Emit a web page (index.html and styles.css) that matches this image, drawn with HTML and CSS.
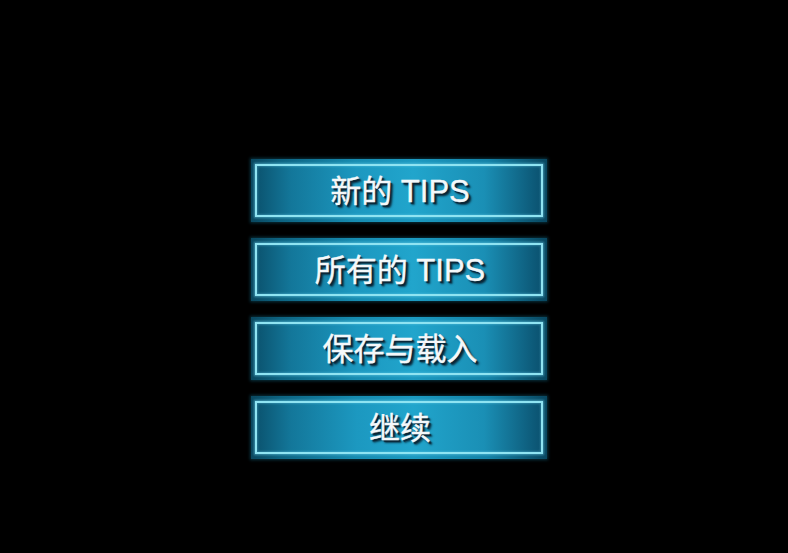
FILE: index.html
```html
<!DOCTYPE html>
<html lang="zh-CN">
<head>
<meta charset="utf-8">
<link rel="stylesheet" href="styles.css">
</head>
<body>
<div class="menu">
  <div class="btn"><div class="inner"><span class="label">新的 TIPS</span></div></div>
  <div class="btn"><div class="inner"><span class="label">所有的 TIPS</span></div></div>
  <div class="btn"><div class="inner"><span class="label">保存与载入</span></div></div>
  <div class="btn"><div class="inner"><span class="label">继续</span></div></div>
</div>
</body>
</html>
```
FILE: styles.css
```css
html, body {
  margin: 0;
  padding: 0;
  background: #000;
  width: 788px;
  height: 553px;
  overflow: hidden;
}
.menu {
  display: flex;
  flex-direction: column;
  gap: 16px;
  padding-top: 159px;
  padding-left: 251px;
}
.btn {
  width: 296px;
  height: 63px;
  box-sizing: border-box;
  padding: 5px 4px 5px 4px;
  background: linear-gradient(90deg, #0a4860 0%, #0d6482 10%, #178cb1 35%, #1c9ac1 55%, #1483a8 80%, #094760 100%);
  box-shadow: 0 0 3px 1px rgba(20, 110, 140, 0.45);
}
.inner {
  height: 100%;
  box-sizing: border-box;
  border: 2px solid #8fe4f2;
  box-shadow: 0 0 2px 1px rgba(110, 210, 235, 0.5), inset 0 0 2px 1px rgba(110, 210, 235, 0.3);
  background: linear-gradient(90deg, #0b5470 0%, #13779a 12%, #1c98c0 35%, #21a5cc 55%, #1a8fb5 80%, #0b5270 100%);
  display: flex;
  align-items: center;
  justify-content: center;
}
.label {
  font-family: "Liberation Sans", "Noto Sans CJK SC", sans-serif;
  font-size: 31px;
  line-height: 1;
  color: #f4f8fa;
  -webkit-text-stroke: 0.4px #f4f8fa;
  text-shadow: 2px 2px 1px #0a2434, 3px 3px 2px rgba(5, 25, 40, 0.7);
  position: relative;
  top: 1px;
  left: 1px;
}
```
